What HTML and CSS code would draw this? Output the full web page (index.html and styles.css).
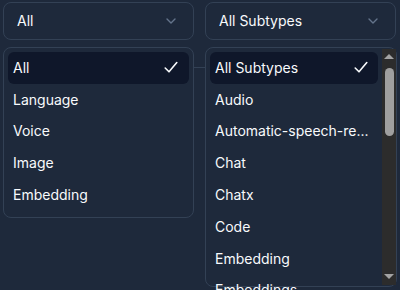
FILE: index.html
```html
<!DOCTYPE html>
<html>
<head>
<meta charset="utf-8">
<link rel="stylesheet" href="styles.css">
</head>
<body>
<div class="page">
  <div class="selects">
    <div class="select">
      <button class="trigger"><span>All</span>
        <svg class="chev" width="10" height="6" viewBox="0 0 10 6"><path d="M1 1L5 5L9 1" fill="none" stroke="#64748b" stroke-width="1.4" stroke-linecap="round" stroke-linejoin="round"/></svg>
      </button>
      <div class="menu">
        <div class="list">
          <div class="item selected"><span>All</span>
            <svg class="check" width="14" height="13" viewBox="0 0 14 13"><path d="M1.2 7L5 10.8L12.8 1.5" fill="none" stroke="#f8fafc" stroke-width="1.6" stroke-linecap="round" stroke-linejoin="round"/></svg>
          </div>
          <div class="item"><span>Language</span></div>
          <div class="item"><span>Voice</span></div>
          <div class="item"><span>Image</span></div>
          <div class="item"><span>Embedding</span></div>
        </div>
      </div>
    </div>
    <div class="select">
      <button class="trigger"><span>All Subtypes</span>
        <svg class="chev" width="10" height="6" viewBox="0 0 10 6"><path d="M1 1L5 5L9 1" fill="none" stroke="#64748b" stroke-width="1.4" stroke-linecap="round" stroke-linejoin="round"/></svg>
      </button>
      <div class="menu menu-scroll">
        <div class="list">
          <div class="item selected"><span>All Subtypes</span>
            <svg class="check" width="14" height="13" viewBox="0 0 14 13"><path d="M1.2 7L5 10.8L12.8 1.5" fill="none" stroke="#f8fafc" stroke-width="1.6" stroke-linecap="round" stroke-linejoin="round"/></svg>
          </div>
          <div class="item"><span>Audio</span></div>
          <div class="item"><span>Automatic-speech-re...</span></div>
          <div class="item"><span>Chat</span></div>
          <div class="item"><span>Chatx</span></div>
          <div class="item"><span>Code</span></div>
          <div class="item"><span>Embedding</span></div>
          <div class="item"><span>Embeddings</span></div>
        </div>
        <div class="scrollbar">
          <div class="arrow up"></div>
          <div class="track"><div class="thumb"></div></div>
          <div class="arrow down"></div>
        </div>
      </div>
    </div>
  </div>
  <div class="content"></div>
</div>
</body>
</html>
```
FILE: styles.css
```css
html, body {
  margin: 0;
  height: 100%;
  overflow: hidden;
}
body {
  background: #1e293b;
  font-family: Inter, "Noto Sans", sans-serif;
  font-size: 14px;
  color: #f8fafc;
}
.page {
  padding: 2px 3px 0;
}
.selects {
  display: grid;
  grid-template-columns: 191px 191px;
  column-gap: 11px;
}
.select {
  position: relative;
}
.trigger {
  width: 100%;
  height: 38px;
  box-sizing: border-box;
  border: 1px solid #334155;
  border-radius: 8px;
  background: #1e293b;
  color: #f8fafc;
  font: inherit;
  display: flex;
  align-items: center;
  justify-content: space-between;
  padding: 0 17px 1px 13px;
}
.menu {
  position: absolute;
  top: 45px;
  left: 0;
  right: 0;
  box-sizing: border-box;
  border: 1px solid #334155;
  border-radius: 8px;
  background: #1e293b;
  display: flex;
  z-index: 2;
}
.menu-scroll {
  height: 240px;
  right: -1px;
}
.list {
  flex: 1;
  padding: 4px 4px 6px;
  min-width: 0;
}
.item {
  height: 31.8px;
  box-sizing: border-box;
  display: flex;
  align-items: center;
  justify-content: space-between;
  padding: 0 11px 1px 5px;
  border-radius: 6px;
  white-space: nowrap;
}
.item .check {
  margin-top: 1px;
}
.item.selected {
  background: #0f172a;
}
.menu-scroll .item {
  padding-right: 10px;
}
.scrollbar {
  width: 14px;
  background: #2c2c2c;
  display: flex;
  flex-direction: column;
  align-items: center;
  margin: 1px 0 1px;
}
.arrow {
  width: 0;
  height: 0;
  border-left: 5px solid transparent;
  border-right: 5px solid transparent;
}
.arrow.up {
  border-bottom: 5px solid #a3a3a3;
  margin: 5px 0 4px;
}
.arrow.down {
  border-top: 5px solid #a3a3a3;
  margin: 4px 0 6px;
}
.track {
  flex: 1;
  width: 100%;
  display: flex;
  justify-content: center;
}
.thumb {
  width: 9px;
  height: 68px;
  margin-top: 5px;
  border-radius: 5px;
  background: #9f9f9f;
}
.content {
  margin-top: 27px;
  border-top: 1px solid #334155;
  height: 160px;
}
```
